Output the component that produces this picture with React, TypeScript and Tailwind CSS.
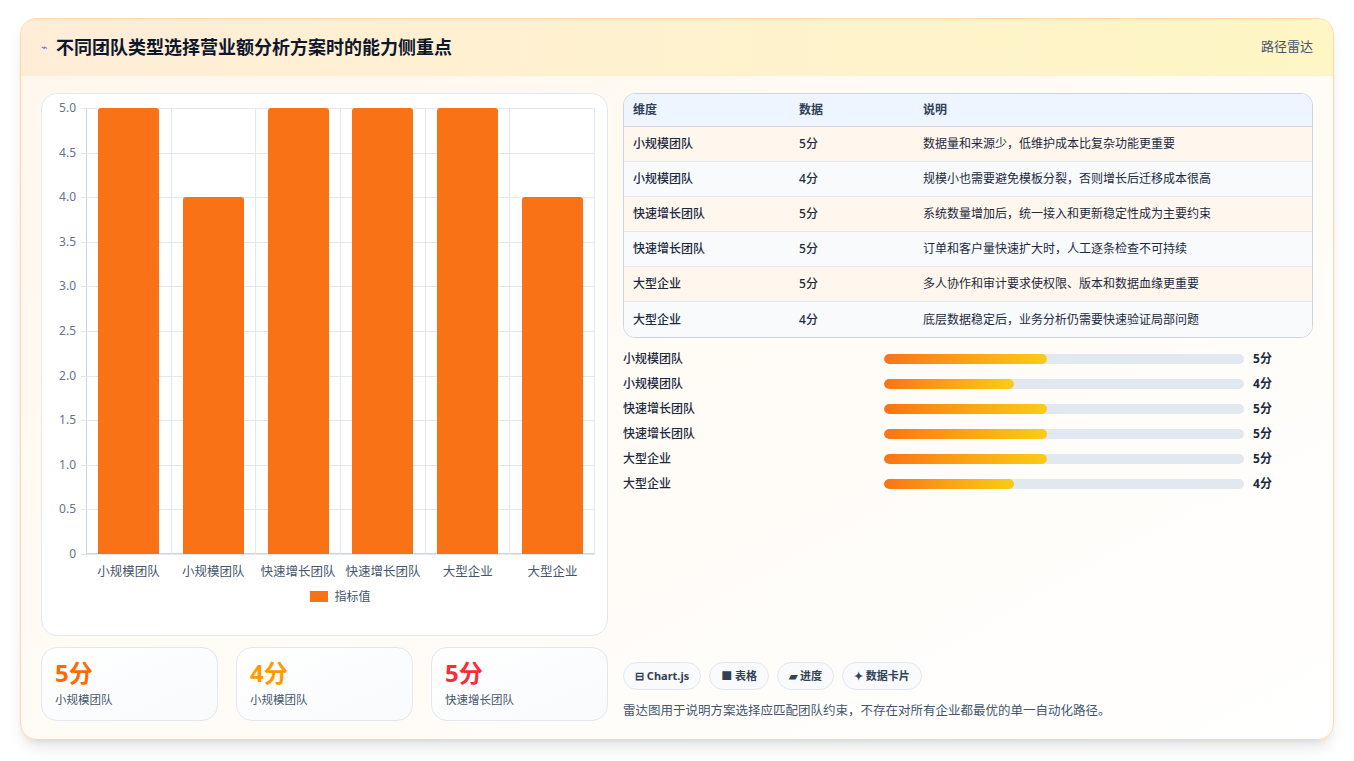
const font = { fontFamily: '"Noto Sans", "Noto Sans CJK SC", sans-serif' };

const rows = [
  { name: "小规模团队", v: 5, note: "数据量和来源少，低维护成本比复杂功能更重要" },
  { name: "小规模团队", v: 4, note: "规模小也需要避免模板分裂，否则增长后迁移成本很高" },
  { name: "快速增长团队", v: 5, note: "系统数量增加后，统一接入和更新稳定性成为主要约束" },
  { name: "快速增长团队", v: 5, note: "订单和客户量快速扩大时，人工逐条检查不可持续" },
  { name: "大型企业", v: 5, note: "多人协作和审计要求使权限、版本和数据血缘更重要" },
  { name: "大型企业", v: 4, note: "底层数据稳定后，业务分析仍需要快速验证局部问题" },
];

const ticks = ["5.0", "4.5", "4.0", "3.5", "3.0", "2.5", "2.0", "1.5", "1.0", "0.5", "0"];

function Chart() {
  const H = 446;
  return (
    <div className="flex-1 rounded-2xl border border-slate-200 bg-white px-3 pt-[14px] pb-4 flex flex-col">
      <div className="flex">
        <div className="relative w-[32px] h-[446px] text-[12px] text-slate-500">
          {ticks.map((t, i) => (
            <div key={t} className="absolute right-[10px] leading-none" style={{ top: (H / 10) * i - 6 }}>{t}</div>
          ))}
        </div>
        <div className="relative flex-1 h-[446px] border-l border-b border-slate-300">
          {ticks.map((t, i) => (
            <div key={t} className="absolute left-[-6px] right-0 border-t border-slate-200" style={{ top: (H / 10) * i }} />
          ))}
          <div className="absolute inset-0 grid grid-cols-6">
            {rows.map((r, i) => (
              <div key={i} className="relative border-r border-slate-200 flex items-end justify-center">
                <div className="w-[61px] bg-[#f97316] rounded-t-[3px] relative" style={{ height: (H * r.v) / 5 }} />
              </div>
            ))}
          </div>
        </div>
      </div>
      <div className="ml-[32px] grid grid-cols-6 text-[12.5px] text-slate-600 mt-[9px]">
        {rows.map((r, i) => (
          <div key={i} className="text-center whitespace-nowrap">{r.name}</div>
        ))}
      </div>
      <div className="flex items-center justify-center gap-[6px] text-[12px] text-slate-600 mt-[6px] ml-[32px]">
        <span className="w-[18px] h-[11px] bg-[#f97316] inline-block" />指标值
      </div>
    </div>
  );
}

export default function App() {
  return (
    <div className="w-[1354px] h-[761px] bg-white p-5 pt-[18px]" style={font}>
      <div className="h-[722px] rounded-2xl border border-orange-200 bg-gradient-to-br from-[#fff7ec] to-white shadow-lg flex flex-col overflow-hidden">
        <div className="h-[57px] shrink-0 flex items-center justify-between px-5 border-b border-orange-100 bg-gradient-to-r from-[#ffedd8] to-[#fef6c4]">
          <div className="flex items-center gap-2">
            <span className="text-[11px] text-indigo-500">⌁</span>
            <h1 className="text-[18px] font-bold text-slate-900">不同团队类型选择营业额分析方案时的能力侧重点</h1>
          </div>
          <span className="text-[13px] text-slate-600">路径雷达</span>
        </div>
        <div className="flex-1 flex gap-[15px] px-5 pt-[17px] pb-[18px]">
          <div className="w-[567px] flex flex-col gap-[11px]">
            <Chart />
            <div className="grid grid-cols-3 gap-[18px]">
              {[
                ["5分", "小规模团队", "text-orange-500"],
                ["4分", "小规模团队", "text-amber-500"],
                ["5分", "快速增长团队", "text-red-500"],
              ].map(([v, l, c], i) => (
                <div key={i} className="h-[74px] rounded-2xl border border-slate-200 bg-gradient-to-br from-white to-slate-50 px-[13px] pt-[10px]">
                  <div className={`text-[24px] font-bold leading-[30px] ${c}`}>{v}</div>
                  <div className="text-[11.5px] text-slate-600 mt-[3px]">{l}</div>
                </div>
              ))}
            </div>
          </div>
          <div className="flex-1 flex flex-col">
            <div className="rounded-xl border border-slate-300 overflow-hidden text-[12px]">
              <div className="flex h-[33px] items-center bg-[#eef5ff] border-b border-slate-300 font-bold text-slate-700">
                <div className="w-[166px] pl-[9px]">维度</div>
                <div className="w-[124px] pl-[9px]">数据</div>
                <div className="flex-1 pl-[9px]">说明</div>
              </div>
              {rows.map((r, i) => (
                <div key={i} className={`flex h-[35px] items-center text-slate-800 ${i < 5 ? "border-b border-slate-200" : ""} ${i % 2 === 0 ? "bg-[#fff7ed]" : "bg-slate-50"}`}>
                  <div className="w-[166px] pl-[9px] font-medium">{r.name}</div>
                  <div className="w-[124px] pl-[9px] font-medium">{r.v}分</div>
                  <div className="flex-1 pl-[9px]">{r.note}</div>
                </div>
              ))}
            </div>
            <div className="mt-[12px] flex flex-col gap-[7px]">
              {rows.map((r, i) => (
                <div key={i} className="flex items-center h-[18px] text-[12px] font-medium text-slate-800">
                  <div className="w-[261px]">{r.name}</div>
                  <div className="w-[360px] h-[10px] rounded-full bg-slate-200 overflow-hidden">
                    <div className="h-full rounded-full bg-gradient-to-r from-[#f97316] to-[#facc15]" style={{ width: r.v === 5 ? 163 : 130 }} />
                  </div>
                  <div className="ml-[9px] font-bold">{r.v}分</div>
                </div>
              ))}
            </div>
            <div className="mt-auto flex gap-[8px] text-[11px] font-bold text-slate-700">
              {["⊟ Chart.js", "■ 表格", "▰ 进度", "✦ 数据卡片"].map((c) => (
                <span key={c} className="h-[28px] px-[11px] rounded-full border border-slate-200 bg-slate-50 flex items-center">{c}</span>
              ))}
            </div>
            <p className="mt-[12px] text-[12.5px] text-slate-600">雷达图用于说明方案选择应匹配团队约束，不存在对所有企业都最优的单一自动化路径。</p>
          </div>
        </div>
      </div>
    </div>
  );
}
